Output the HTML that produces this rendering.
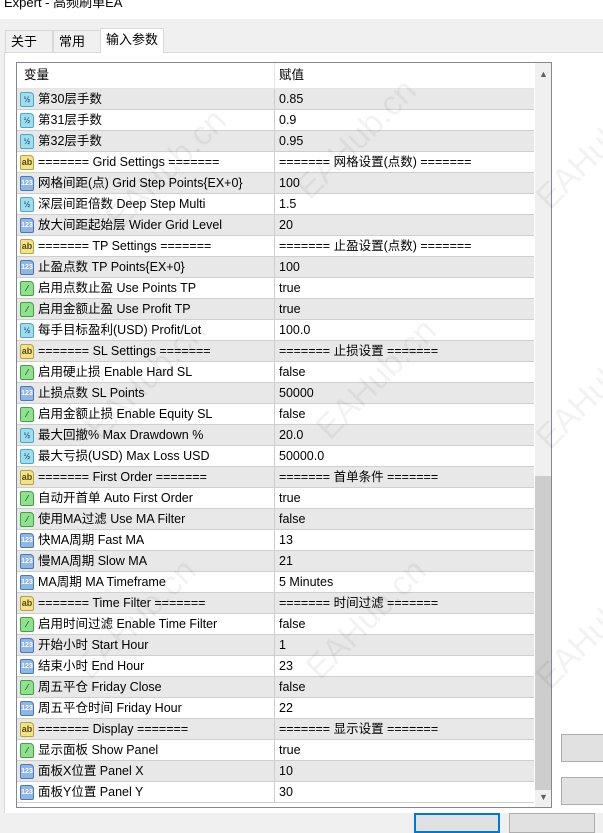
<!DOCTYPE html>
<html><head><meta charset="utf-8"><style>
*{margin:0;padding:0;box-sizing:border-box}
body{width:603px;height:822px;overflow:hidden;background:#f0f0f0;font-family:"Liberation Sans","Noto Sans CJK SC",sans-serif;font-size:12.5px;color:#000;position:relative}
.title{position:absolute;left:0;top:0;width:603px;height:19px;background:#fff;font-size:13px;line-height:10px;padding-left:4px;overflow:hidden}
.title span{position:relative;top:-2px}
.tab{position:absolute;top:30px;height:23px;border:1px solid #d9d9d9;border-bottom:none;background:#f0f0f0;font-size:13px;line-height:22px;padding-left:5px}
.panel{position:absolute;left:4px;top:52px;width:620px;height:761px;background:#fff;border-top:1px solid #d9d9d9;border-left:1px solid #d9d9d9}
.list{position:absolute;left:16px;top:62px;width:536px;height:746px;border:1px solid #828790;background:#fff;overflow:hidden}
.hdr{position:absolute;left:0;top:0;width:517px;height:26px;background:#fff;border-bottom:1px solid #e5e5e5;line-height:24px}
.hdr div{position:absolute;top:0}
.row{position:absolute;left:0;width:517px;height:21px;border-bottom:1px solid #cfcfcf;line-height:20px}
.row.g{background:#e8e8e8}
.row .n{position:absolute;left:21px;top:0;white-space:nowrap;line-height:20px}
.row .v{position:absolute;left:262px;top:0;white-space:nowrap;line-height:20px}
.row .c{position:absolute;left:257px;top:0;width:1px;height:21px;background:#cfcfcf}
.ic{position:absolute;left:3px;top:3px;width:14px;height:15px;border-radius:2px 4px 2px 2px;font-size:8px;line-height:13px;text-align:center;font-weight:bold}
.i1{background:#9fdcec;border:1px solid #4aa9c4;color:#1a5d8c}
.i2{background:#f2e38a;border:1px solid #b9a23a;color:#5a4a10;font-size:9px}
.i3{background:#8fb7e6;border:1px solid #4a78b8;color:#fff;font-size:7px}
.i4{background:#8fe08f;border:1px solid #3fa43f;color:#1a5a1a}
.sb{position:absolute;left:518px;top:0;width:16px;height:744px;background:#f0f0f0}
.thumb{position:absolute;left:518px;top:413px;width:16px;height:314px;background:#cdcdcd}
.btn{position:absolute;background:#e1e1e1;border:1px solid #adadad}
.wm{position:absolute;color:rgba(0,0,0,0.05);font-size:34px;transform:rotate(-45deg);white-space:nowrap;font-family:"Liberation Sans",sans-serif}
</style></head><body>
<div class="title"><span>Expert - 高频刷单EA</span></div>
<div class="tab" style="left:5px;width:48px">关于</div>
<div class="tab" style="left:53px;width:48px">常用</div>
<div class="tab" style="left:100px;top:28px;height:25px;width:64px;background:#fff;z-index:2">输入参数</div>
<div class="panel"></div>
<div class="list">
<div class="hdr"><div style="left:7px">变量</div><div style="left:262px">赋值</div><div style="left:257px;top:0;width:1px;height:26px;background:#e5e5e5"></div></div>
<div id="rows"></div>
<div class="sb"><div style="position:absolute;left:4px;top:6px;font-size:9px;color:#606060">&#9650;</div><div style="position:absolute;left:4px;top:729px;font-size:9px;color:#606060">&#9660;</div></div>
<div class="thumb"></div>
</div>
<div class="wm" style="left:90px;top:150px">EAHub.cn</div>
<div class="wm" style="left:280px;top:120px">EAHub.cn</div>
<div class="wm" style="left:520px;top:130px">EAHub.cn</div>
<div class="wm" style="left:70px;top:360px">EAHub.cn</div>
<div class="wm" style="left:300px;top:360px">EAHub.cn</div>
<div class="wm" style="left:520px;top:370px">EAHub.cn</div>
<div class="wm" style="left:60px;top:600px">EAHub.cn</div>
<div class="wm" style="left:290px;top:600px">EAHub.cn</div>
<div class="wm" style="left:520px;top:610px">EAHub.cn</div>
<div class="btn" style="left:561px;top:734px;width:50px;height:28px"></div>
<div class="btn" style="left:561px;top:777px;width:50px;height:28px"></div>
<div class="btn" style="left:414px;top:813px;width:86px;height:20px;border:2px solid #0078d7"></div>
<div class="btn" style="left:509px;top:813px;width:86px;height:20px"></div>
<script>
var d=[
[1,"第30层手数","0.85"],[1,"第31层手数","0.9"],[1,"第32层手数","0.95"],
[2,"======= Grid Settings =======","======= 网格设置(点数) ======="],
[3,"网格间距(点) Grid Step Points{EX+0}","100"],[1,"深层间距倍数 Deep Step Multi","1.5"],[3,"放大间距起始层 Wider Grid Level","20"],
[2,"======= TP Settings =======","======= 止盈设置(点数) ======="],
[3,"止盈点数 TP Points{EX+0}","100"],[4,"启用点数止盈 Use Points TP","true"],[4,"启用金额止盈 Use Profit TP","true"],[1,"每手目标盈利(USD) Profit/Lot","100.0"],
[2,"======= SL Settings =======","======= 止损设置 ======="],
[4,"启用硬止损 Enable Hard SL","false"],[3,"止损点数 SL Points","50000"],[4,"启用金额止损 Enable Equity SL","false"],[1,"最大回撤% Max Drawdown %","20.0"],[1,"最大亏损(USD) Max Loss USD","50000.0"],
[2,"======= First Order =======","======= 首单条件 ======="],
[4,"自动开首单 Auto First Order","true"],[4,"使用MA过滤 Use MA Filter","false"],[3,"快MA周期 Fast MA","13"],[3,"慢MA周期 Slow MA","21"],[3,"MA周期 MA Timeframe","5 Minutes"],
[2,"======= Time Filter =======","======= 时间过滤 ======="],
[4,"启用时间过滤 Enable Time Filter","false"],[3,"开始小时 Start Hour","1"],[3,"结束小时 End Hour","23"],[4,"周五平仓 Friday Close","false"],[3,"周五平仓时间 Friday Hour","22"],
[2,"======= Display =======","======= 显示设置 ======="],
[4,"显示面板 Show Panel","true"],[3,"面板X位置 Panel X","10"],[3,"面板Y位置 Panel Y","30"]];
var lab={1:"½",2:"ab",3:"123",4:"⁄"};
var h="";
d.forEach(function(r,i){
h+='<div class="row'+(i%2==0?' g':'')+'" style="top:'+(26+i*21)+'px"><div class="ic i'+r[0]+'">'+lab[r[0]]+'</div><div class="n">'+r[1]+'</div><div class="c"></div><div class="v">'+r[2]+'</div></div>';
});
document.getElementById("rows").innerHTML=h;
</script>
</body></html>
